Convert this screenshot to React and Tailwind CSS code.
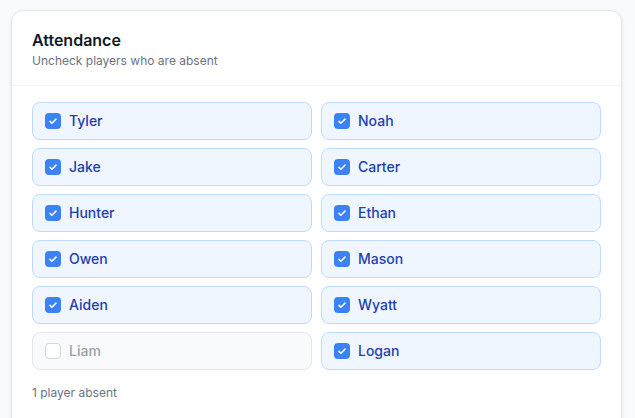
import React, { useState } from 'react'

const PLAYERS = ['Tyler', 'Noah', 'Jake', 'Carter', 'Hunter', 'Ethan', 'Owen', 'Mason', 'Aiden', 'Wyatt', 'Liam', 'Logan']

const Check = ({ on }) =>
  on ? (
    <span className="flex h-4 w-4 items-center justify-center rounded-[4px] bg-[#3b82f6]">
      <svg viewBox="0 0 16 16" className="h-3 w-3" fill="none" stroke="white" strokeWidth="2" strokeLinecap="round" strokeLinejoin="round">
        <path d="M4 8.5l2.5 2.5L12 5.5" />
      </svg>
    </span>
  ) : (
    <span className="h-4 w-4 rounded-[4px] border border-gray-300 bg-white" />
  )

export default function App() {
  const [present, setPresent] = useState(() => {
    const p = {}
    PLAYERS.forEach(n => (p[n] = n !== 'Liam'))
    return p
  })
  const absent = PLAYERS.filter(n => !present[n]).length

  return (
    <div className="h-[418px] overflow-hidden bg-[#f8fafc] pl-[11px] pr-[13px] pt-[10px] font-['Inter',sans-serif]">
      <div className="rounded-xl border border-gray-200 bg-white shadow-sm">
        <div className="border-b border-gray-100 px-5 pb-4 pt-[19px]">
          <h2 className="text-base font-semibold leading-5 text-gray-900">Attendance</h2>
          <p className="mt-[3px] text-xs text-gray-500">Uncheck players who are absent</p>
        </div>
        <div className="px-5 pb-8 pt-4">
          <div className="grid grid-cols-2 gap-x-[9px] gap-y-2">
            {PLAYERS.map(name => {
              const on = present[name]
              return (
                <button
                  key={name}
                  onClick={() => setPresent(p => ({ ...p, [name]: !p[name] }))}
                  className={
                    'flex h-[38px] items-center gap-2 rounded-lg border px-3 text-left text-sm font-medium ' +
                    (on ? 'border-blue-200 bg-blue-50 text-[#1e40af]' : 'border-gray-200 bg-gray-50 text-gray-400')
                  }
                >
                  <Check on={on} />
                  {name}
                </button>
              )
            })}
          </div>
          <p className="mt-[15px] text-xs text-gray-500">
            {absent} player{absent === 1 ? '' : 's'} absent
          </p>
        </div>
      </div>
    </div>
  )
}
